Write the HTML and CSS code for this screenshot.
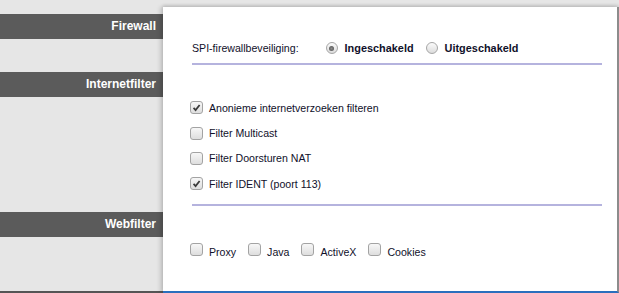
FILE: index.html
```html
<!DOCTYPE html>
<html lang="nl">
<head>
    <meta charset="UTF-8">
    <title>Beveiliging</title>
    <link rel="stylesheet" href="styles.css">
</head>
<body>
    <div class="page">
        <aside class="side">
            <h2 class="side-title">Firewall</h2>
            <h2 class="side-title side-title-filter">Internetfilter</h2>
            <h2 class="side-title side-title-web">Webfilter</h2>
        </aside>

        <main class="panel">
            <!-- Firewall -->
            <div class="spi-row">
                <span class="spi-label">SPI-firewallbeveiliging:</span>
                <label class="radio-option">
                    <span class="radio checked"></span>
                    <span class="radio-text">Ingeschakeld</span>
                </label>
                <label class="radio-option">
                    <span class="radio"></span>
                    <span class="radio-text">Uitgeschakeld</span>
                </label>
            </div>
            <div class="divider"></div>

            <!-- Internetfilter -->
            <div class="filter-list">
                <label class="check-row">
                    <span class="checkbox checked"><svg viewBox="0 0 12 12"><path d="M2.8 6.4 L5 8.8 L9.4 3.2"/></svg></span>
                    Anonieme internetverzoeken filteren
                </label>
                <label class="check-row">
                    <span class="checkbox"></span>
                    Filter Multicast
                </label>
                <label class="check-row">
                    <span class="checkbox"></span>
                    Filter Doorsturen NAT
                </label>
                <label class="check-row">
                    <span class="checkbox checked"><svg viewBox="0 0 12 12"><path d="M2.8 6.4 L5 8.8 L9.4 3.2"/></svg></span>
                    Filter IDENT (poort 113)
                </label>
            </div>
            <div class="divider"></div>

            <!-- Webfilter -->
            <div class="web-row">
                <label class="web-option"><span class="checkbox"></span>Proxy</label>
                <label class="web-option"><span class="checkbox"></span>Java</label>
                <label class="web-option"><span class="checkbox"></span>ActiveX</label>
                <label class="web-option"><span class="checkbox"></span>Cookies</label>
            </div>
        </main>
    </div>
</body>
</html>
```

FILE: styles.css
```css
/* General body styles */
body {
    margin: 0;
    font-family: "Liberation Sans", Arial, sans-serif;
    background-color: #e6e6e6;
    color: #10102a;
    overflow: hidden;
}

.page {
    display: flex;
    height: 293px;
}

/* Left column with section titles */
.side {
    width: 163px;
    flex-shrink: 0;
    padding-top: 14px;
    border-bottom: 2px solid #555;
    box-sizing: border-box;
}

.side-title {
    margin: 0;
    height: 25px;
    line-height: 25px;
    padding-right: 7px;
    background-color: #5b5b5b;
    color: #fff;
    font-size: 12px;
    font-weight: bold;
    text-align: right;
}

.side-title-filter {
    margin-top: 33px;
}

.side-title-web {
    margin-top: 115px;
}

/* White content panel */
.panel {
    flex: 1;
    margin-top: 7px;
    padding: 33px 15px 0 29px;
    background-color: #fff;
    border-right: 2px solid #8c8c8c;
    border-bottom: 2px solid #2a6fbd;
    box-shadow: -3px 0 4px rgba(0, 0, 0, 0.14), 0 -2px 3px rgba(0, 0, 0, 0.12);
    font-size: 10.6px;
}

.spi-row {
    display: flex;
    align-items: center;
    height: 16px;
}

.spi-label {
    margin-right: 27px;
}

.radio-option {
    display: flex;
    align-items: center;
    margin-right: 12px;
}

.radio-text {
    margin-left: 7px;
    font-size: 10.9px;
    font-weight: bold;
}

.radio {
    width: 10px;
    height: 10px;
    border: 1px solid #a6a6a6;
    border-radius: 50%;
    background: linear-gradient(#fbfbfb, #dcdcdc);
    display: flex;
    justify-content: center;
    align-items: center;
}

.radio.checked::after {
    content: "";
    width: 5px;
    height: 5px;
    border-radius: 50%;
    background: radial-gradient(#8a8a8a, #4a4a4a);
}

.divider {
    height: 2px;
    margin-top: 7px;
    background-color: #b5b3de;
}

/* Internetfilter checkboxes */
.filter-list {
    padding-top: 30px;
}

.check-row {
    display: flex;
    align-items: center;
    height: 25.4px;
    margin-left: -2px;
}

.checkbox {
    width: 11px;
    height: 11px;
    flex-shrink: 0;
    border: 1px solid #a3a3a3;
    border-radius: 3px;
    background: linear-gradient(#f7f7f7, #dedede);
    margin-right: 6px;
    display: flex;
}

.checkbox svg {
    width: 11px;
    height: 11px;
}

.checkbox path {
    fill: none;
    stroke: #3a3a3a;
    stroke-width: 1.9;
}

/* Webfilter options */
.web-row {
    display: flex;
    align-items: center;
    height: 16px;
    margin-top: 38px;
    margin-left: -2px;
}

.web-option {
    display: flex;
    align-items: center;
    margin-right: 12px;
}

.web-option .checkbox {
    margin-right: 6px;
    margin-bottom: 5px;
}
```
